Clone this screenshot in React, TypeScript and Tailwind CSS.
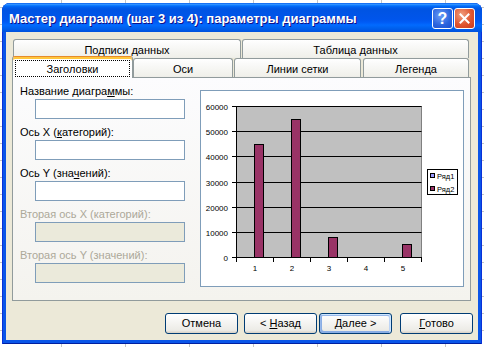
import React from "react";

const tabBase =
  "flex items-center justify-center border border-b-0 border-[#919B9C] rounded-t-[3px] bg-[linear-gradient(180deg,#ffffff,#fafaf9_26%,#f0f0ea_95%,#ecebe6)] pt-[2px] text-[11px] leading-[13px]";

function Tab({ className, children }: { className: string; children: React.ReactNode }) {
  return <div className={`${tabBase} ${className}`}>{children}</div>;
}

function Label({ children, disabled }: { children: React.ReactNode; disabled?: boolean }) {
  return (
    <div className={`h-[13px] leading-[13px] text-[11px] whitespace-nowrap ${disabled ? "text-[#ACA899]" : "text-black"}`}>
      {children}
    </div>
  );
}

function Field({ disabled }: { disabled?: boolean }) {
  return (
    <div
      className={`ml-[15px] mt-[1px] w-[150px] h-[20px] border border-[#7F9DB9] ${disabled ? "bg-[#EBEADB]" : "bg-white"}`}
    />
  );
}

const btnBase =
  "flex items-center justify-center w-[73px] h-[21px] rounded-[3px] border border-[#003C74] bg-[linear-gradient(180deg,#ffffff,#ecebe6_86%,#d6d0c5)] text-[11px] leading-[13px] text-black";

function Chart() {
  const data = [45000, 55000, 8000, 0, 5000];
  const x0 = 35;
  const x1 = 220;
  const y0 = 15;
  const y1 = 166;
  const step = (y1 - y0) / 6;
  const labels = ["60000", "50000", "40000", "30000", "20000", "10000", "0"];
  return (
    <svg width={262} height={195} viewBox="0 0 262 195" className="block">
      <rect x={x0 + 0.5} y={y0 + 0.5} width={x1 - x0} height={y1 - y0} fill="#C0C0C0" stroke="#808080" strokeWidth={1} />
      {labels.map((l, i) => {
        const y = Math.round(y0 + step * i) + 0.5;
        return (
          <g key={l}>
            <line x1={x0} x2={x1 + 0.5} y1={y} y2={y} stroke="#000" strokeWidth={1} />
            <line x1={x0 - 4} x2={x0} y1={y} y2={y} stroke="#000" strokeWidth={1} />
            <text x={27} y={y + 3} textAnchor="end" fontSize={8} fontFamily="'Liberation Sans', Arial, sans-serif" fill="#000">
              {l}
            </text>
          </g>
        );
      })}
      {data.map((v, k) => {
        if (v === 0) return null;
        const top = Math.round(y1 - (v / 60000) * (y1 - y0));
        const x = x0 + 37 * k + 18;
        return <rect key={k} x={x + 0.5} y={top + 0.5} width={9} height={y1 - top} fill="#993366" stroke="#000" strokeWidth={1} />;
      })}
      <line x1={x0 + 0.5} x2={x0 + 0.5} y1={y0} y2={y1 + 1} stroke="#000" strokeWidth={1} />
      <line x1={x0} x2={x1 + 1} y1={y1 + 0.5} y2={y1 + 0.5} stroke="#000" strokeWidth={1} />
      {[0, 1, 2, 3, 4, 5].map((k) => (
        <line key={k} x1={x0 + 37 * k + 0.5} x2={x0 + 37 * k + 0.5} y1={y1} y2={y1 + 5} stroke="#000" strokeWidth={1} />
      ))}
      {[1, 2, 3, 4, 5].map((n, k) => (
        <text key={n} x={x0 + 37 * k + 19} y={180} textAnchor="middle" fontSize={8} fontFamily="'Liberation Sans', Arial, sans-serif" fill="#000">
          {n}
        </text>
      ))}
      <rect x={226.5} y={78.5} width={30} height={25} fill="#fff" stroke="#000" strokeWidth={1} />
      <rect x={229.5} y={82.5} width={4} height={4} fill="#9999FF" stroke="#000" strokeWidth={1} />
      <text x={236} y={87.5} fontSize={7.5} fontFamily="'Liberation Sans', Arial, sans-serif" fill="#000">
        Ряд1
      </text>
      <rect x={229.5} y={95.5} width={4} height={4} fill="#993366" stroke="#000" strokeWidth={1} />
      <text x={236} y={100.5} fontSize={7.5} fontFamily="'Liberation Sans', Arial, sans-serif" fill="#000">
        Ряд2
      </text>
    </svg>
  );
}

export default function App() {
  return (
    <div className="w-[484px] h-[347px] overflow-hidden bg-white bg-[linear-gradient(90deg,#c4c4c4_1px,transparent_1px),linear-gradient(180deg,#c4c4c4_1px,transparent_1px)] bg-[size:64px_17px] bg-[position:61px_7px] pl-[2px] pt-[3px] font-['Liberation_Sans',Arial,sans-serif] text-black">
      <div className="w-[480px] h-[341px] flex flex-col rounded-t-[8px] bg-[#0A55E8] shadow-[inset_1px_0_#0831D9,inset_-1px_0_#0831D9,inset_0_-1px_#001EA0]">
        {/* Title bar */}
        <div className="h-[29px] flex items-start rounded-t-[8px] bg-[linear-gradient(180deg,#0058ee_0%,#3593ff_4%,#288eff_6%,#127dff_8%,#036ffc_10%,#0262ee_14%,#0057e5_20%,#0054e3_24%,#0055eb_56%,#005bf5_66%,#026afe_76%,#0062ef_86%,#0058e6_94%,#0052dc_100%)]">
          <div className="pl-[7px] pt-[8px] text-[13px] leading-[15px] font-bold text-white whitespace-nowrap [text-shadow:1px_1px_#0F1089]">
            Мастер диаграмм (шаг 3 из 4): параметры диаграммы
          </div>
          <div className="ml-auto mr-[7px] mt-[5px] flex gap-[1px]">
            <div className="w-[21px] h-[21px] rounded-[3px] border border-white bg-[radial-gradient(circle_at_40%_35%,#6a9cf7,#2a63dd_60%,#1b4fcf)] flex items-center justify-center text-white font-bold text-[16px] leading-none pt-[1px]">
              ?
            </div>
            <div className="w-[21px] h-[21px] rounded-[3px] border border-white bg-[radial-gradient(circle_at_35%_30%,#f0a080,#e0552f_55%,#c93a1c)] flex items-center justify-center">
              <svg width="11" height="11" viewBox="0 0 11 11">
                <path d="M1.5 1.5 L9.5 9.5 M9.5 1.5 L1.5 9.5" stroke="#fff" strokeWidth="2" strokeLinecap="square" />
              </svg>
            </div>
          </div>
        </div>
        {/* Body */}
        <div className="flex-1 mx-[4px] mb-[4px] bg-[#ECE9D8] flex flex-col">
          <div className="flex mt-[7px] h-[19px]">
            <Tab className="ml-[7px] w-[228px] h-[19px]">Подписи данных</Tab>
            <Tab className="ml-[1px] w-[227px] h-[19px]">Таблица данных</Tab>
          </div>
          <div className="flex h-[19px] items-start">
            <div className="relative z-10 ml-[6px] w-[121px] h-[22px] -mt-[2px] flex border border-b-0 border-[#919B9C] border-t-[#E68B2C] rounded-t-[3px] bg-white shadow-[inset_0_2px_#FFC73C] pt-[3px] px-[2px]">
              <div className="flex-1 h-[17px] border border-dotted border-black flex items-center justify-center text-[11px] leading-[13px] pt-[1px]">
                Заголовки
              </div>
            </div>
            <Tab className="w-[100px] h-[19px]">Оси</Tab>
            <Tab className="ml-[1px] w-[127px] h-[19px]">Линии сетки</Tab>
            <Tab className="ml-[2px] w-[106px] h-[19px]">Легенда</Tab>
          </div>
          <div className="ml-[6px] w-[459px] h-[224px] border border-[#919B9C] bg-[linear-gradient(180deg,#fcfcfe,#f4f3ee)] flex items-start">
            <div className="pl-[7px] pt-[7px] w-[187px] flex flex-col">
              <Label>
                Название диагра<span className="underline">м</span>мы:
              </Label>
              <Field />
              <div className="mt-[7px]">
                <Label>
                  Ось X (<span className="underline">к</span>атегорий):
                </Label>
              </div>
              <Field />
              <div className="mt-[7px]">
                <Label>
                  Ось Y (зна<span className="underline">ч</span>ений):
                </Label>
              </div>
              <Field />
              <div className="mt-[7px]">
                <Label disabled>Вторая ось X (категорий):</Label>
              </div>
              <Field disabled />
              <div className="mt-[7px]">
                <Label disabled>Вторая ось Y (значений):</Label>
              </div>
              <Field disabled />
            </div>
            <div className="mt-[12px] w-[264px] h-[197px] border border-[#7F9DB9] bg-white">
              <Chart />
            </div>
          </div>
          <div className="flex mt-[12px] h-[21px]">
            <div className={`${btnBase} ml-[159px]`}>Отмена</div>
            <div className={`${btnBase} ml-[6px]`}>
              &lt;&nbsp;<span className="underline">Н</span>азад
            </div>
            <div
              className={`${btnBase} ml-[2px] shadow-[inset_-1px_1px_#cee7ff,inset_1px_2px_#98b8ea,inset_-2px_2px_#bcd4f6,inset_1px_-1px_#89ade4,inset_2px_-2px_#89ade4]`}
            >
              <span className="underline">Д</span>алее&nbsp;&gt;
            </div>
            <div className={`${btnBase} ml-[8px]`}>
              <span className="underline">Г</span>отово
            </div>
          </div>
        </div>
      </div>
    </div>
  );
}
